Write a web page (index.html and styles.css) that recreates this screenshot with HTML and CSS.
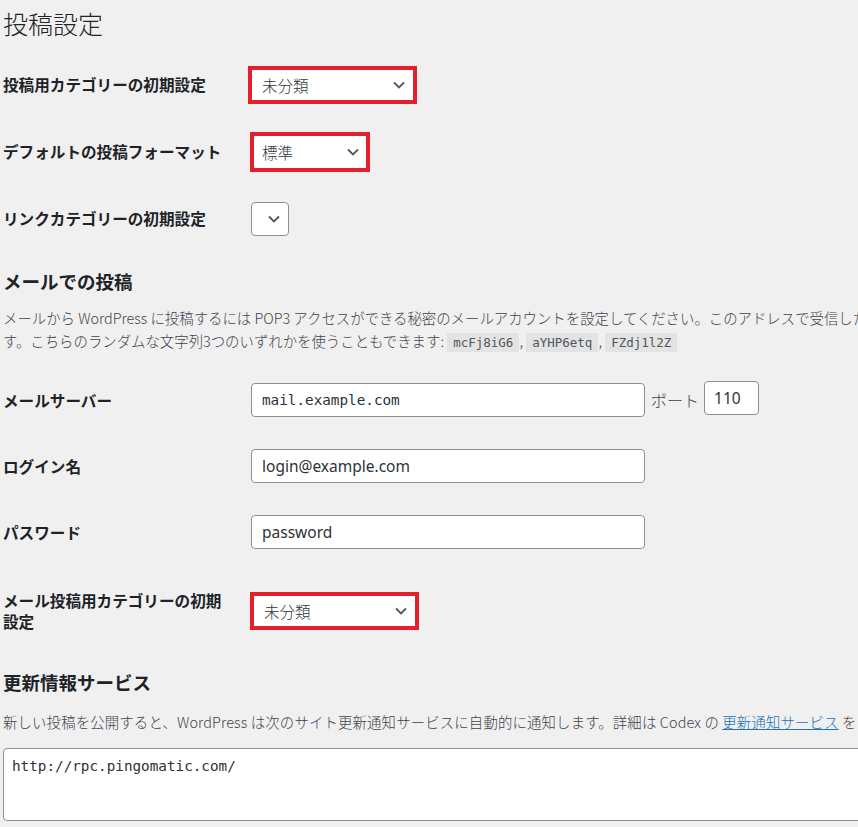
FILE: index.html
```html
<!DOCTYPE html>
<html lang="ja">
<head>
<meta charset="UTF-8">
<meta name="viewport" content="width=device-width, initial-scale=1.0">
<title>投稿設定</title>
<link rel="stylesheet" href="styles.css">
</head>
<body>
<div class="wrap">
  <h1>投稿設定</h1>

  <div class="rows first">
    <div class="row">
      <label class="label">投稿用カテゴリーの初期設定</label>
      <div class="field">
        <span class="select marked cat">
          <select><option>未分類</option></select>
          <svg width="12" height="8" viewBox="0 0 12 8"><path d="M1 1.5l5 5 5-5" fill="none" stroke="#50575e" stroke-width="1.8"/></svg>
        </span>
      </div>
    </div>
    <div class="row">
      <label class="label">デフォルトの投稿フォーマット</label>
      <div class="field">
        <span class="select marked format">
          <select><option>標準</option></select>
          <svg width="12" height="8" viewBox="0 0 12 8"><path d="M1 1.5l5 5 5-5" fill="none" stroke="#50575e" stroke-width="1.8"/></svg>
        </span>
      </div>
    </div>
    <div class="row">
      <label class="label">リンクカテゴリーの初期設定</label>
      <div class="field">
        <span class="select empty">
          <select><option></option></select>
          <svg width="12" height="8" viewBox="0 0 12 8"><path d="M1 1.5l5 5 5-5" fill="none" stroke="#50575e" stroke-width="1.8"/></svg>
        </span>
      </div>
    </div>
  </div>

  <h2>メールでの投稿</h2>
  <p class="desc">メールから WordPress に投稿するには POP3 アクセスができる秘密のメールアカウントを設定してください。このアドレスで受信したメールはすべて公開されるので、このアドレスは厳重に秘密にしておくことをお勧めしま<br>す。こちらのランダムな文字列3つのいずれかを使うこともできます: <code>mcFj8iG6</code>, <code>aYHP6etq</code>, <code>FZdj1l2Z</code></p>

  <div class="rows mail">
    <div class="row">
      <label class="label">メールサーバー</label>
      <div class="field">
        <input class="input mono" type="text" value="mail.example.com">
        <span class="port-label">ポート</span>
        <input class="input port" type="text" value="110">
      </div>
    </div>
    <div class="row">
      <label class="label">ログイン名</label>
      <div class="field">
        <input class="input" type="text" value="login@example.com">
      </div>
    </div>
    <div class="row">
      <label class="label">パスワード</label>
      <div class="field">
        <input class="input" type="text" value="password">
      </div>
    </div>
    <div class="row tall">
      <label class="label">メール投稿用カテゴリーの初期設定</label>
      <div class="field">
        <span class="select marked cat mailcat">
          <select><option>未分類</option></select>
          <svg width="12" height="8" viewBox="0 0 12 8"><path d="M1 1.5l5 5 5-5" fill="none" stroke="#50575e" stroke-width="1.8"/></svg>
        </span>
      </div>
    </div>
  </div>

  <h2 class="second">更新情報サービス</h2>
  <p class="desc ping">新しい投稿を公開すると、WordPress は次のサイト更新通知サービスに自動的に通知します。詳細は Codex の <a href="#">更新通知サービス</a> をご覧ください。複数の URL を入力する場合は改行で区切ってください。</p>

  <textarea class="ping-sites">http://rpc.pingomatic.com/</textarea>
</div>
</body>
</html>
```

FILE: styles.css
```css
html, body {
  margin: 0;
  background: #f0f0f1;
  overflow: hidden;
}

body {
  font-family: "Noto Sans CJK JP", "Noto Sans", sans-serif;
  color: #1d2327;
}

.wrap {
  width: 1100px;
  padding: 7px 0 0 3px;
}

h1 {
  margin: 0;
  font-size: 25px;
  font-weight: 300;
  line-height: 32px;
}

h2 {
  margin: 16px 0 0;
  font-size: 18.5px;
  font-weight: 700;
  line-height: 26px;
}

h2.second {
  margin-top: 13px;
}

.rows.first {
  margin-top: 12px;
}

.rows.mail {
  margin-top: 13px;
}

.row {
  display: grid;
  grid-template-columns: 248px auto;
  align-items: center;
  min-height: 67px;
}

.rows.mail .row {
  min-height: 66px;
}

.rows.mail .row.tall {
  min-height: 91px;
}

.label {
  width: 224px;
  font-size: 15.6px;
  font-weight: 700;
  line-height: 21px;
}

.field {
  display: flex;
  align-items: center;
}

/* selects */
.select {
  position: relative;
  display: inline-block;
}

.select select {
  appearance: none;
  -webkit-appearance: none;
  display: block;
  box-sizing: border-box;
  background: #fff;
  color: #2c3338;
  font-family: inherit;
  font-size: 15.5px;
  font-weight: 300;
  padding: 0 0 0 10px;
  border: 1px solid #8c8f94;
  border-radius: 4px;
  margin: 0;
}

.select svg {
  position: absolute;
  top: 50%;
  right: 12px;
  transform: translateY(-50%);
}

.select.marked select {
  border: 4px solid #e3202b;
  border-radius: 0;
}

.select.cat {
  margin-left: -3px;
}

.select.cat select {
  width: 169px;
  height: 38px;
}

.select.mailcat {
  margin-left: -1px;
}

.select.format {
  margin-left: -1px;
}

.select.format select {
  width: 120px;
  height: 40px;
  padding-left: 8px;
}

.select.format svg {
  right: 11px;
}

.select.empty select {
  width: 38px;
  height: 34px;
}

.select.empty svg {
  right: 9px;
}

/* text inputs */
.input {
  box-sizing: border-box;
  width: 394px;
  height: 34px;
  margin: 0;
  padding: 0 10px;
  background: #fff;
  border: 1px solid #8c8f94;
  border-radius: 4px;
  color: #2c3338;
  font-family: "Noto Sans", sans-serif;
  font-size: 15.5px;
}

.input.mono {
  font-family: "DejaVu Sans Mono", monospace;
  font-size: 14.3px;
}

.port-label {
  margin: 0 5px 0 6px;
  font-size: 16px;
  font-weight: 300;
  color: #3c434a;
}

.input.port {
  width: 55px;
  margin-bottom: 4px;
  padding: 0 9px;
}

/* descriptions */
.desc {
  margin: 12px 0 0;
  white-space: nowrap;
  font-size: 14.4px;
  font-weight: 300;
  line-height: 23px;
  color: #3c434a;
}

.desc.ping {
  margin-top: 15px;
  letter-spacing: 0.15px;
}

.desc a {
  color: #2271b1;
}

code {
  font-family: "DejaVu Sans Mono", monospace;
  font-size: 12.5px;
  background: rgba(0, 0, 0, 0.05);
  padding: 2px 6px 2px;
  color: #50575e;
}

.ping-sites {
  display: block;
  box-sizing: border-box;
  width: 1000px;
  height: 73px;
  margin: 15px 0 0;
  padding: 6px 8px;
  border: 1px solid #8c8f94;
  border-radius: 4px;
  background: #fff;
  resize: none;
  font-family: "DejaVu Sans Mono", monospace;
  font-size: 14.3px;
  line-height: 22px;
  color: #2c3338;
}
```
